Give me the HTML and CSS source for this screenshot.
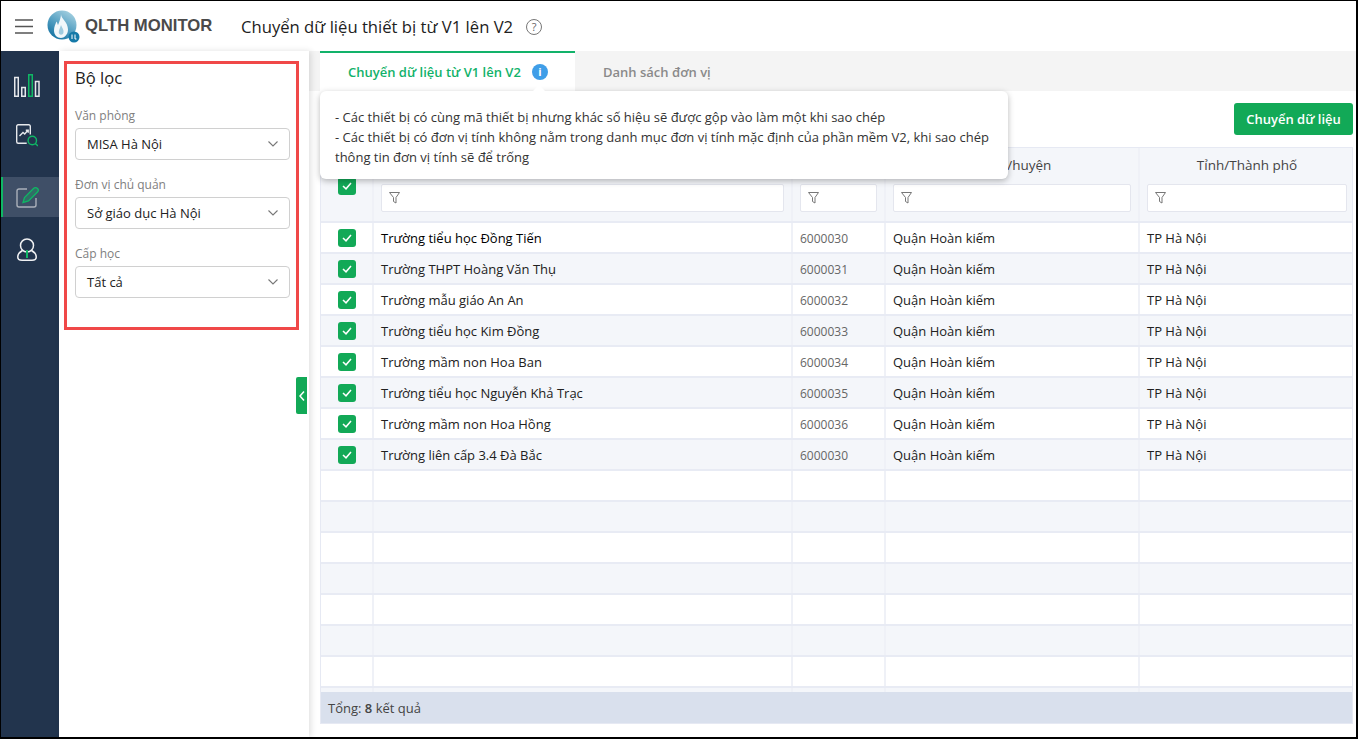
FILE: index.html
```html
<!DOCTYPE html>
<html lang="vi">
<head>
<meta charset="utf-8">
<title>QLTH Monitor</title>
<link rel="stylesheet" href="styles.css">
</head>
<body>
<div class="frame">
  <header class="topbar">
    <svg class="menu" width="18" height="15" viewBox="0 0 18 15"><path d="M0 1h18M0 7.500h18M0 14h18" stroke="#555" stroke-width="1.400" fill="none"/></svg>
    <svg class="logo" width="33" height="33" viewBox="0 0 33 33">
      <defs><linearGradient id="lg" x1=".8" y1="0" x2=".2" y2="1"><stop offset="0" stop-color="#a9d3e2"/><stop offset=".55" stop-color="#4f9cc0"/><stop offset="1" stop-color="#0f6f9f"/></linearGradient></defs>
      <circle cx="15" cy="15" r="14.500" fill="url(#lg)"/>
      <path d="M14 4C14 9 21 12 21 19.500 21 25 17 28 14 28 10 28 7 25 7 20.500 7 16.500 8.500 14 9.500 11.500 10.500 13 10.500 14 11 15 12.500 11 14 8 14 4z" fill="#f1f7fa"/>
      <path d="M14 15c1 3 3 4.500 2.500 7.500-.4 2.300-3 3-4.300 1.300C11 22 13 18 14 15z" fill="#9fcbdf"/>
      <circle cx="27" cy="27" r="5.500" fill="#1479a8"/>
      <path d="M25 24.500v4.500M28 24.500v4.500h1.500" stroke="#fff" stroke-width="1" fill="none"/>
    </svg>
    <span class="brand">QLTH MONITOR</span>
    <h1 class="page-title">Chuyển dữ liệu thiết bị từ V1 lên V2</h1>
    <span class="help">?</span>
  </header>
  <div class="body">
    <nav class="rail">
      <a class="rail-item">
        <svg width="26" height="23" viewBox="0 0 26 23" fill="none" stroke-width="1.500"><rect x=".75" y="3.500" width="3.500" height="18.750" stroke="#e6e8ec"/><rect x="7.750" y="13.500" width="3.500" height="8.750" stroke="#e6e8ec"/><rect x="14.750" y=".75" width="3.500" height="21.500" stroke="#0fb765"/><rect x="21.500" y="7.500" width="3.500" height="14.750" stroke="#e6e8ec"/></svg>
      </a>
      <a class="rail-item">
        <svg width="22" height="23" viewBox="0 0 22 23" fill="none" stroke-width="1.400"><path d="M14.300 10.500V2.200A1.500 1.500 0 0 0 12.800.7H2.200A1.500 1.500 0 0 0 .7 2.200v15.600a1.500 1.500 0 0 0 1.500 1.500h8.500" stroke="#e6e8ec"/><path d="M3.500 12l3.500-3.500 1.700 1.500 3-3.500M9.800 6.300h2.400v2.400" stroke="#e6e8ec"/><circle cx="16.300" cy="16.500" r="4.200" stroke="#0fb765"/><path d="M19.300 19.500L22 22" stroke="#0fb765"/></svg>
      </a>
      <a class="rail-item active">
        <svg width="23" height="21" viewBox="0 0 23 21" fill="none"><path d="M11 2H3a2 2 0 0 0-2 2v14a2 2 0 0 0 2 2h15a2 2 0 0 0 2-2v-7" stroke="#aab0ba" stroke-width="1.400"/><path d="M7 15.500l1.500-5L17.500 1.500c1-1 3-1 4 0s1 2.500 0 3.500L12.500 14z" stroke="#0fb765" stroke-width="1.300" fill="#0fb765" fill-opacity=".3"/></svg>
      </a>
      <a class="rail-item">
        <svg width="20" height="23" viewBox="0 0 20 23" fill="none" stroke-width="1.500"><circle cx="10" cy="7.500" r="6.500" stroke="#f0f1f3"/><path d="M5.500 12.500C2 14.500.75 17 .75 19c0 2 1.500 3.250 4.250 3.250h10c2.750 0 4.250-1.250 4.250-3.250 0-2-1.250-4.500-4.750-6.500" stroke="#f0f1f3"/><path d="M10 12v8" stroke="#0fb765" stroke-width="2"/></svg>
      </a>
    </nav>
    <aside class="filters">
      <div class="filter-box">
        <h2 class="filter-title">Bộ lọc</h2>
        <div class="field"><label class="field-label">Văn phòng</label><div class="select"><span>MISA Hà Nội</span><svg width="10" height="6" viewBox="0 0 10 6"><path d="M.5.500L5 5 9.500.5" fill="none" stroke="#777" stroke-width="1.100"/></svg></div></div>
        <div class="field"><label class="field-label">Đơn vị chủ quản</label><div class="select"><span>Sở giáo dục Hà Nội</span><svg width="10" height="6" viewBox="0 0 10 6"><path d="M.5.500L5 5 9.500.5" fill="none" stroke="#777" stroke-width="1.100"/></svg></div></div>
        <div class="field"><label class="field-label">Cấp học</label><div class="select"><span>Tất cả</span><svg width="10" height="6" viewBox="0 0 10 6"><path d="M.5.500L5 5 9.500.5" fill="none" stroke="#777" stroke-width="1.100"/></svg></div></div>
      </div>
      <button class="collapse"><svg width="6" height="10" viewBox="0 0 6 10"><path d="M5 .5L1 5l4 4.500" fill="none" stroke="#fff" stroke-width="1.500"/></svg></button>
    </aside>
    <main class="main">
      <div class="tabs">
        <div class="tab active">Chuyển dữ liệu từ V1 lên V2<span class="info">i</span></div>
        <div class="tab">Danh sách đơn vị</div>
      </div>
      <div class="tooltip">
        <div>- Các thiết bị có cùng mã thiết bị nhưng khác số hiệu sẽ được gộp vào làm một khi sao chép</div>
        <div>- Các thiết bị có đơn vị tính không nằm trong danh mục đơn vị tính mặc định của phần mềm V2, khi sao chép thông tin đơn vị tính sẽ để trống</div>
      </div>
      <div class="content">
        <div class="actions"><button class="primary">Chuyển dữ liệu</button></div>
        <div class="table-wrap">
          <div class="grid">
            <div class="row head">
              <div class="cell check"><span class="cb"><svg width="10" height="8" viewBox="0 0 10 8"><path d="M1 4l3 2.800L9 1" fill="none" stroke="#fff" stroke-width="1.500"/></svg></span></div>
              <div class="cell hc"><div class="ht"></div><div class="filter"><svg width="11" height="12" viewBox="0 0 11 12"><path d="M.5.500h10L7 5.500V11L4.500 9.500v-4z" fill="none" stroke="#777"/></svg></div></div>
              <div class="cell hc"><div class="ht"></div><div class="filter"><svg width="11" height="12" viewBox="0 0 11 12"><path d="M.5.500h10L7 5.500V11L4.500 9.500v-4z" fill="none" stroke="#777"/></svg></div></div>
              <div class="cell hc"><div class="ht">Quận/huyện</div><div class="filter"><svg width="11" height="12" viewBox="0 0 11 12"><path d="M.5.500h10L7 5.500V11L4.500 9.500v-4z" fill="none" stroke="#777"/></svg></div></div>
              <div class="cell hc"><div class="ht">Tỉnh/Thành phố</div><div class="filter"><svg width="11" height="12" viewBox="0 0 11 12"><path d="M.5.500h10L7 5.500V11L4.500 9.500v-4z" fill="none" stroke="#777"/></svg></div></div>
            </div>
            <div class="rows" id="rows"></div>
          </div>
          <div class="total">Tổng: <b>8</b> kết quả</div>
        </div>
      </div>
    </main>
  </div>
</div>
<script src="app.js"></script>
</body>
</html>
```
FILE: styles.css
```css
* { box-sizing: border-box; }
html, body { margin: 0; height: 100%; overflow: hidden; }
body { font-family: "Open Sans", "Noto Sans", sans-serif; font-size: 13px; color: #212121; background: #fff; }
.frame { width: 1358px; height: 739px; border: 1px solid #000; border-width: 1px 2px 2px 1px; display: flex; flex-direction: column; }

.topbar { height: 50px; flex: none; display: flex; align-items: center; background: #fff; padding-left: 14px; }
.menu { margin-right: 14px; }
.logo { margin-right: 5px; }
.brand { font-family: "Liberation Sans", sans-serif; font-weight: 700; font-size: 16.7px; color: #4a4a4a; width: 156px; margin-top: -1px; }
.page-title { margin: 1px 0 0; font-size: 16.65px; font-weight: 400; color: #212121; }
.help { width: 16px; height: 16px; margin: 1px 0 0 13px; border: 1px solid #777; border-radius: 50%; font-size: 11px; line-height: 14px; text-align: center; color: #666; }

.body { flex: 1; display: flex; min-height: 0; }
.rail { width: 58px; flex: none; background: #22344d; padding-top: 14px; display: flex; flex-direction: column; }
.rail-item { height: 40px; flex: none; padding-right: 8px; display: flex; align-items: center; justify-content: center; border-left: 2px solid transparent; }
.rail-item:nth-child(1) { margin-bottom: 10px; }
.rail-item:nth-child(2) { margin-bottom: 22px; }
.rail-item:nth-child(3) { margin-bottom: 12px; background: #3f4f67; border-left-color: #0fb765; }

.filters { position: relative; width: 250px; flex: none; background: #fff; padding: 10px 0 0 5px; box-shadow: 2px 0 6px rgba(0,0,0,.12); z-index: 1; }
.filter-box { width: 235px; height: 269px; border: 3px solid #f04848; padding: 3px 6px 0 8px; }
.filter-title { margin: 0 0 18px; font-size: 16.6px; font-weight: 400; line-height: 22px; color: #212121; }
.field { margin-bottom: 16px; }
.field-label { display: block; font-size: 12px; line-height: 18px; color: #808080; margin-bottom: 3px; }
.select { height: 32px; border: 1px solid #d0d0d0; border-radius: 4px; padding: 0 11px; display: flex; align-items: center; justify-content: space-between; }
.collapse { position: absolute; right: 2px; top: 326px; width: 11px; height: 37px; border: 0; padding: 0; background: #12a957; border-radius: 2px 0 0 2px; display: flex; align-items: center; justify-content: center; }

.main { flex: 1; min-width: 0; position: relative; padding-left: 11px; background: #fff; }
.tabs { height: 40px; margin-left: -11px; padding-left: 11px; background: #f4f4f4; display: flex; }
.tab { padding: 0 28px; display: flex; align-items: center; font-size: 13px; font-weight: 600; color: #8a8a8a; white-space: nowrap; }
.tab.active { width: 255px; padding-right: 0; background: #fff; border-top: 2px solid #12b26a; color: #12b26a; }
.tab:not(.active) { padding-top: 2px; }
.info { width: 16px; height: 16px; margin-left: 11px; background: #3f9ee8; border-radius: 50%; color: #fff; font-size: 11px; font-weight: 700; line-height: 16px; text-align: center; }

.tooltip { position: absolute; left: 11px; top: 40px; width: 688px; height: 88px; padding: 16px 12px 0 15px; background: #fff; border-radius: 6px; box-shadow: 0 2px 6px rgba(0,0,0,.28); line-height: 20px; font-size: 13px; color: #333; z-index: 3; }
.tooltip::before { content: ""; position: absolute; left: 212px; top: -6px; border: 7px solid transparent; border-top: 0; border-bottom-color: #fff; }

.content { padding-right: 3px; }
.actions { height: 56px; padding-top: 12px; display: flex; justify-content: flex-end; }
.primary { width: 119px; height: 32px; border: 0; border-radius: 3px; background: #12a957; color: #fff; font: 600 13px "Open Sans", sans-serif; }

.table-wrap { height: 577px; border: 1px solid #e6e9f3; display: flex; flex-direction: column; }
.grid { flex: 1; overflow: hidden; min-height: 0; }
.row { display: grid; grid-template-columns: 53px 419px 93px 254px 1fr; }
.cell { border-right: 2px solid #eff1f7; height: 31px; padding: 0 7px; line-height: 31px; white-space: nowrap; }
.cell:last-child { border-right: 0; }
.cell.code { color: #666; font-size: 12px; }
.cell.strong { color: #000; }
.row.body-row { border-bottom: 2px solid #e8ebf4; height: 31px; }
.row.body-row .cell { height: 29px; }
.row.alt { background: #f4f6fa; }
.row.head { height: 75px; background: #f4f6fa; border-bottom: 2px solid #e8ebf4; }
.row.head .cell { height: 73px; }
.row.head .check { padding-top: 2px; }
.check { display: flex; justify-content: center; align-items: center; padding: 0; }
.cb { width: 18px; height: 18px; border-radius: 3px; background: #12a957; display: flex; align-items: center; justify-content: center; }
.hc { padding: 0 7px; }
.hc:last-child { padding-right: 5px; }
.ht { text-align: center; height: 36px; line-height: 35px; color: #444; font-size: 13.5px; }
.filter { height: 28px; background: #fff; border: 1px solid #e4e6ee; border-radius: 2px; padding: 0 7px; display: flex; align-items: center; }
.total { height: 31px; flex: none; background: #d9e0ed; padding-left: 7px; line-height: 33px; font-size: 13px; color: #444; }
.total b { font-weight: 600; }
```
FILE: app.js
```js
var data = [
  ["Trường tiểu học Đồng Tiến", "6000030"],
  ["Trường THPT Hoàng Văn Thụ", "6000031"],
  ["Trường mẫu giáo An An", "6000032"],
  ["Trường tiểu học Kim Đồng", "6000033"],
  ["Trường mầm non Hoa Ban", "6000034"],
  ["Trường tiểu học Nguyễn Khả Trạc", "6000035"],
  ["Trường mầm non Hoa Hồng", "6000036"],
  ["Trường liên cấp 3.4 Đà Bắc", "6000030"]
];
var tick = '<span class="cb"><svg width="10" height="8" viewBox="0 0 10 8"><path d="M1 4l3 2.800L9 1" fill="none" stroke="#fff" stroke-width="1.500"/></svg></span>';
var html = "";
for (var i = 0; i < 16; i++) {
  var d = data[i];
  html += '<div class="row body-row' + (i % 2 ? " alt" : "") + '">' +
    '<div class="cell check">' + (d ? tick : "") + '</div>' +
    '<div class="cell' + (i === 0 ? " strong" : "") + '">' + (d ? d[0] : "") + '</div>' +
    '<div class="cell code">' + (d ? d[1] : "") + '</div>' +
    '<div class="cell">' + (d ? "Quận Hoàn kiếm" : "") + '</div>' +
    '<div class="cell">' + (d ? "TP Hà Nội" : "") + '</div></div>';
}
document.getElementById("rows").innerHTML = html;
```
